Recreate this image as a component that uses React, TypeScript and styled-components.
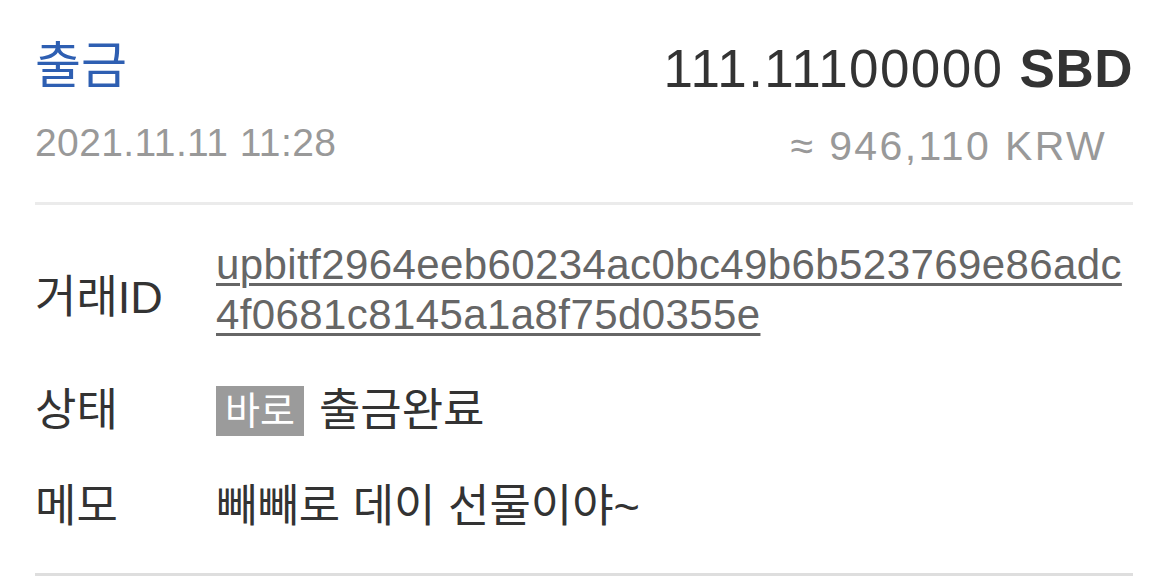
import styled, { createGlobalStyle } from "styled-components";

const GlobalStyle = createGlobalStyle`
  html, body {
    margin: 0;
    padding: 0;
    background: #ffffff;
  }
  body {
    font-family: "Liberation Sans", "Noto Sans CJK KR", sans-serif;
    color: #333333;
  }
`;

const Page = styled.div`
  width: 1163px;
  padding: 0 30px 0 35px;
  box-sizing: border-box;
`;

const Header = styled.header`
  display: flex;
  justify-content: space-between;
  align-items: flex-start;
  padding: 36px 0 34px;
  border-bottom: 3px solid #ebebeb;
`;

const Column = styled.div<{ $right?: boolean }>`
  display: flex;
  flex-direction: column;
  align-items: ${(p) => (p.$right ? "flex-end" : "flex-start")};
`;

const Title = styled.h1`
  margin: 0;
  font-size: 50px;
  line-height: 60px;
  font-weight: 400;
  color: #2e5fb2;
`;

const Amount = styled.div`
  margin-top: 3px;
  font-size: 53px;
  line-height: 60px;
  letter-spacing: 1.4px;
  color: #333333;

  strong {
    font-weight: 700;
    letter-spacing: 0.5px;
  }
`;

const SubText = styled.div<{ $spacing: number; $size: number; $offset?: number }>`
  margin-top: 25px;
  margin-right: ${(p) => p.$offset ?? 0}px;
  font-size: ${(p) => p.$size}px;
  line-height: 44px;
  letter-spacing: ${(p) => p.$spacing}px;
  color: #999999;
  white-space: nowrap;
`;

const Details = styled.dl`
  display: grid;
  grid-template-columns: 181px 1fr;
  row-gap: 46px;
  margin: 0;
  padding: 35px 0 41px;
  border-bottom: 3px solid #dedede;
`;

const Label = styled.dt<{ $shift?: number }>`
  margin: ${(p) => p.$shift ?? 0}px 0 0;
  font-size: 45px;
  line-height: 50px;
  color: #333333;
  white-space: nowrap;
`;

const Value = styled.dd`
  display: flex;
  align-items: center;
  margin: 0;
  font-size: 45px;
  line-height: 50px;
  color: #333333;
`;

const TxLink = styled.a`
  display: block;
  width: 917px;
  font-size: 42px;
  line-height: 50px;
  letter-spacing: 0.4px;
  color: #666666;
  text-decoration: underline;
  text-decoration-thickness: 3px;
  text-underline-offset: 4px;
  word-break: break-all;
`;

const Badge = styled.span`
  display: inline-flex;
  align-items: center;
  height: 50px;
  padding: 0 9px;
  margin-right: 15px;
  background: #9b9b9b;
  color: #ffffff;
  font-size: 38px;
`;

export default function App() {
  return (
    <Page>
      <GlobalStyle />
      <Header>
        <Column>
          <Title>출금</Title>
          <SubText $size={39} $spacing={0.4}>
            2021.11.11 11:28
          </SubText>
        </Column>
        <Column $right>
          <Amount>
            111.11100000 <strong>SBD</strong>
          </Amount>
          <SubText $size={41} $spacing={2.4} $offset={26}>
            ≈ 946,110 KRW
          </SubText>
        </Column>
      </Header>
      <Details>
        <Label $shift={33}>거래ID</Label>
        <Value>
          <TxLink href="#">
            upbitf2964eeb60234ac0bc49b6b523769e86adc4f0681c8145a1a8f75d0355e
          </TxLink>
        </Value>
        <Label>상태</Label>
        <Value>
          <Badge>바로</Badge>
          출금완료
        </Value>
        <Label>메모</Label>
        <Value>빼빼로 데이 선물이야~</Value>
      </Details>
    </Page>
  );
}
